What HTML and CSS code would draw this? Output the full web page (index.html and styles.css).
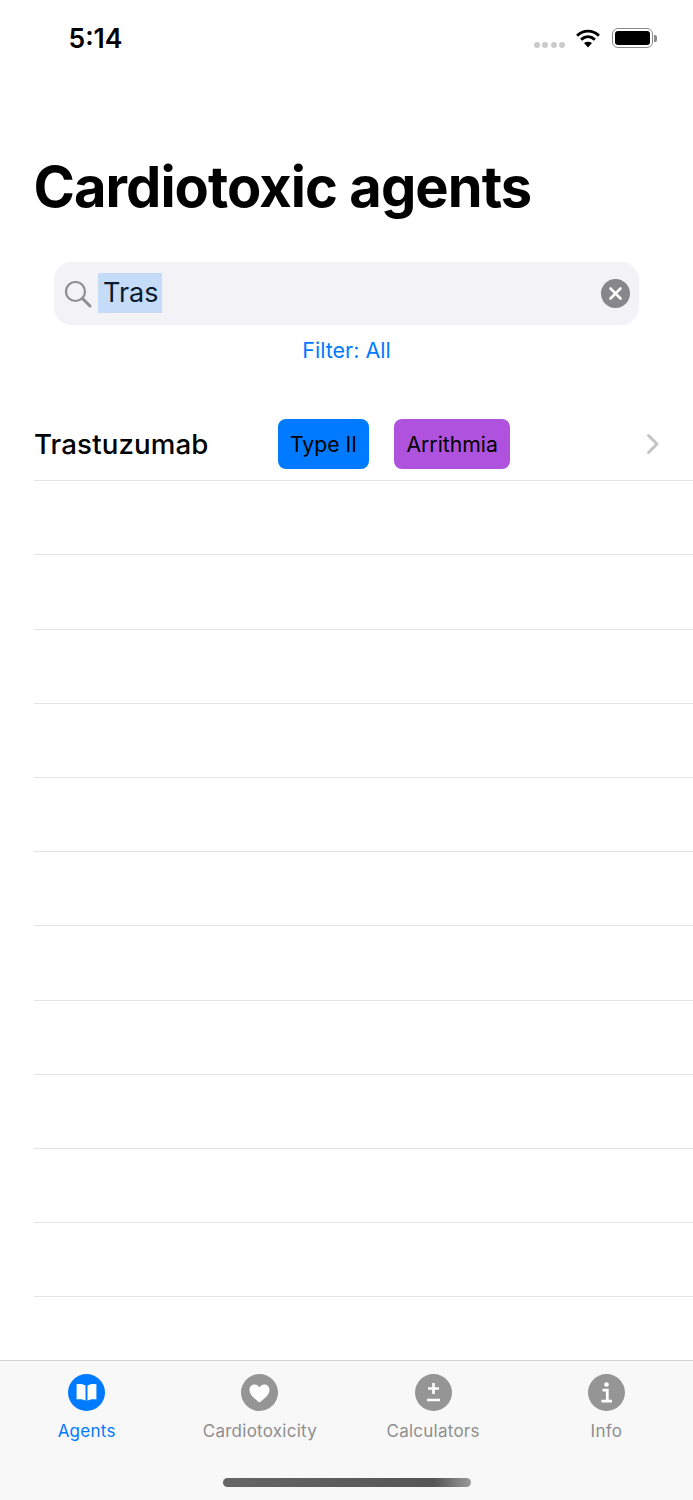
FILE: index.html
```html
<!DOCTYPE html>
<html lang="en">
<head>
    <meta charset="UTF-8">
    <meta name="viewport" content="width=device-width, initial-scale=1.0">
    <title>Cardiotoxic agents</title>
    <link rel="stylesheet" href="styles.css">
</head>
<body>
    <div class="screen">
        <div class="status-bar">
            <span class="time">5:14</span>
            <div class="status-icons">
                <div class="signal"><i></i><i></i><i></i><i></i></div>
                <svg class="wifi" width="28" height="20" viewBox="0 0 28 22">
                    <path d="M2 8.5C9 1.8 19 1.8 26 8.5M6.4 12.8C11 8.6 17 8.6 21.6 12.8" fill="none" stroke="#000" stroke-width="3.2"/>
                    <path d="M14 21.5L9.6 16.6C12.2 14.6 15.8 14.6 18.4 16.6Z" fill="#000"/>
                </svg>
                <div class="battery"><div class="battery-fill"></div></div>
                <div class="battery-cap"></div>
            </div>
        </div>

        <h1 class="title">Cardiotoxic agents</h1>

        <div class="search">
            <svg class="search-icon" width="28" height="28" viewBox="0 0 28 28">
                <circle cx="11.5" cy="11.5" r="9.5" fill="none" stroke="#8e8e93" stroke-width="2.2"/>
                <path d="M18.5 18.5L26 26" stroke="#8e8e93" stroke-width="3" stroke-linecap="round"/>
            </svg>
            <span class="search-text">Tras</span>
            <svg class="clear-icon" width="29" height="29" viewBox="0 0 29 29">
                <circle cx="14.5" cy="14.5" r="14.5" fill="#86868b"/>
                <path d="M9.5 9.5L19.5 19.5M19.5 9.5L9.5 19.5" stroke="#fff" stroke-width="2.6" stroke-linecap="round"/>
            </svg>
        </div>
        <div class="filter">Filter: All</div>

        <div class="list">
            <div class="row">
                <span class="agent-name">Trastuzumab</span>
                <span class="tag tag-type">Type II</span>
                <span class="tag tag-effect">Arrithmia</span>
                <svg class="chevron" width="14" height="22" viewBox="0 0 14 22">
                    <path d="M2.5 2.5L11 11L2.5 19.5" fill="none" stroke="#c4c4c7" stroke-width="3" stroke-linecap="round" stroke-linejoin="round"/>
                </svg>
            </div>
            <div class="row"></div>
            <div class="row"></div>
            <div class="row"></div>
            <div class="row"></div>
            <div class="row"></div>
            <div class="row"></div>
            <div class="row"></div>
            <div class="row"></div>
            <div class="row"></div>
            <div class="row"></div>
            <div class="row"></div>
        </div>

        <div class="tab-bar">
            <div class="tabs">
                <div class="tab tab-active">
                    <svg width="37" height="37" viewBox="0 0 37 37">
                        <circle cx="18.5" cy="18.5" r="18.5" fill="#007aff"/>
                        <path d="M17.5 11.5C15.5 10 12.5 9.6 8.6 10.2V25.4C12 25 15 25.3 17.5 26.8ZM19.5 11.5C21.5 10 24.5 9.6 28.4 10.2V25.4C25 25 22 25.3 19.5 26.8Z" fill="#fff"/>
                    </svg>
                    <span>Agents</span>
                </div>
                <div class="tab">
                    <svg width="37" height="37" viewBox="0 0 37 37">
                        <circle cx="18.5" cy="18.5" r="18.5" fill="#959595"/>
                        <path d="M18.5 28.5C12 23.5 8.5 20.3 8.5 15.8C8.5 12.6 10.9 10.6 13.6 10.6C15.6 10.6 17.4 11.6 18.5 13.6C19.6 11.6 21.4 10.6 23.4 10.6C26.1 10.6 28.5 12.6 28.5 15.8C28.5 20.3 25 23.5 18.5 28.5Z" fill="#fff"/>
                    </svg>
                    <span>Cardiotoxicity</span>
                </div>
                <div class="tab">
                    <svg width="37" height="37" viewBox="0 0 37 37">
                        <circle cx="18.5" cy="18.5" r="18.5" fill="#959595"/>
                        <path d="M18.5 9V20M13 14.5H24M12 26H25" stroke="#fff" stroke-width="2.6" fill="none"/>
                    </svg>
                    <span>Calculators</span>
                </div>
                <div class="tab">
                    <svg width="37" height="37" viewBox="0 0 37 37">
                        <circle cx="18.5" cy="18.5" r="18.5" fill="#959595"/>
                        <circle cx="18.5" cy="10.5" r="2.3" fill="#fff"/>
                        <path d="M14.5 16.2H19.3V27M13.5 27.2H24" stroke="#fff" stroke-width="2.8" fill="none"/>
                    </svg>
                    <span>Info</span>
                </div>
            </div>
            <div class="home-indicator"></div>
        </div>
    </div>
</body>
</html>
```

FILE: styles.css
```css
body {
    font-family: 'Inter', sans-serif;
    margin: 0;
    padding: 0;
    background-color: #ffffff;
    color: #000000;
}

.screen {
    height: 1500px;
    display: flex;
    flex-direction: column;
    overflow: hidden;
}

.status-bar {
    height: 76px;
    display: flex;
    align-items: center;
    justify-content: space-between;
    padding: 0 36px 0 68.5px;
    box-sizing: border-box;
}

.time {
    font-size: 26.5px;
    font-weight: 600;
}

.status-icons {
    display: flex;
    align-items: center;
}

.signal {
    display: flex;
    gap: 2.3px;
    margin: 14px 9px 0 0;
}

.signal i {
    width: 6px;
    height: 6px;
    border-radius: 50%;
    background-color: #cbcbcb;
}

.wifi {
    margin-right: 10px;
}

.battery {
    width: 41px;
    height: 20px;
    border: 1.5px solid #8a8a8a;
    border-radius: 6px;
    padding: 2px;
    box-sizing: border-box;
}

.battery-fill {
    height: 100%;
    background-color: #000000;
    border-radius: 3px;
}

.battery-cap {
    width: 3px;
    height: 7px;
    margin-left: 1px;
    background-color: #8a8a8a;
    border-radius: 0 2px 2px 0;
}

.title {
    font-size: 56px;
    line-height: 68px;
    font-weight: 700;
    letter-spacing: -0.95px;
    margin: 77px 0 0 33.5px;
}

.search {
    height: 63px;
    margin: 41px 54px 0;
    padding: 0 9.5px;
    background-color: #f2f2f7;
    border-radius: 18px;
    display: flex;
    align-items: center;
}

.search-icon {
    margin-right: 6.5px;
    flex-shrink: 0;
}

.search-text {
    background-color: #c5dcf8;
    color: #0b1a2e;
    font-size: 27px;
    line-height: 40px;
    padding: 0 4px 0 5px;
    margin-top: -2px;
}

.clear-icon {
    margin-left: auto;
}

.filter {
    text-align: center;
    color: #007aff;
    font-size: 21.5px;
    line-height: 26px;
    margin-top: 12px;
}

.list {
    margin-top: 44px;
    margin-left: 34px;
}

.row {
    height: 74.2px;
    box-sizing: border-box;
    border-bottom: 1px solid #e3e3e5;
    display: flex;
    align-items: center;
    padding-right: 33px;
}

.agent-name {
    width: 244px;
    font-size: 27.7px;
    font-weight: 500;
    letter-spacing: 0.1px;
}

.tag {
    height: 50px;
    line-height: 50px;
    padding: 0 12px;
    border-radius: 8px;
    font-size: 21.2px;
}

.tag-type {
    background-color: #007aff;
    margin-right: 25px;
}

.tag-effect {
    background-color: #af52de;
    padding: 0 12.5px;
}

.chevron {
    margin-left: auto;
}

.tab-bar {
    margin-top: auto;
    height: 140px;
    box-sizing: border-box;
    background-color: #f8f8f8;
    border-top: 1px solid #d4d4d6;
    display: flex;
    flex-direction: column;
    align-items: center;
}

.tabs {
    display: grid;
    grid-template-columns: repeat(4, 1fr);
    width: 100%;
    padding: 13px 0 0;
    box-sizing: border-box;
}

.tab {
    display: flex;
    flex-direction: column;
    align-items: center;
    color: #8e8e8e;
    font-size: 17px;
    letter-spacing: 0.25px;
}

.tab span {
    margin-top: 7.5px;
    line-height: 24px;
}

.tab-active {
    color: #007aff;
}

.home-indicator {
    width: 248px;
    height: 9px;
    margin-top: 35.5px;
    border-radius: 5px;
    background: linear-gradient(90deg, #666666, #555555 85%, #9a9a9a);
}
```
